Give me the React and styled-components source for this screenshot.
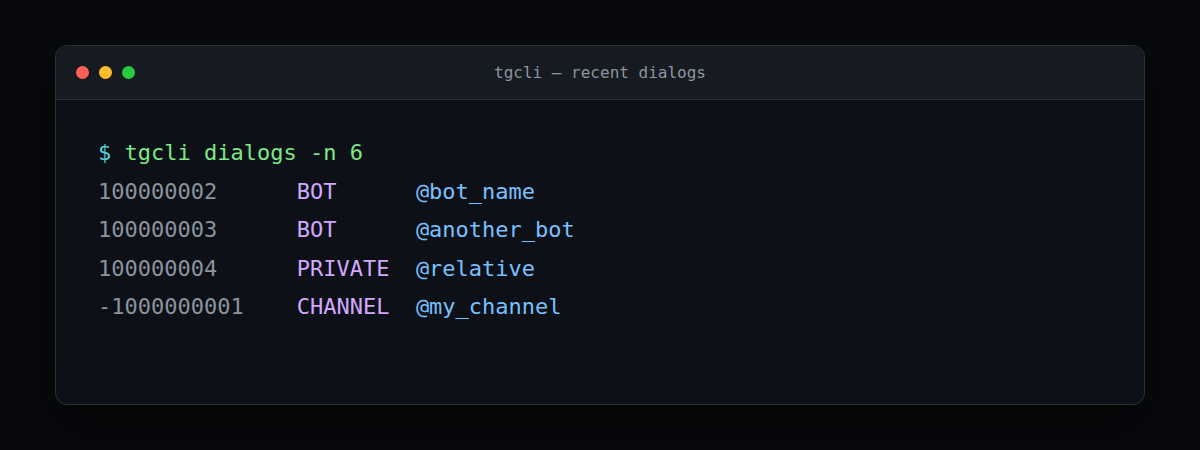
import React from "react";
import styled, { createGlobalStyle } from "styled-components";

const Global = createGlobalStyle`
  html, body { margin: 0; padding: 0; }
  body {
    background: #07090c;
    font-family: "DejaVu Sans Mono", monospace;
  }
`;

const Page = styled.div`
  height: 450px;
  display: flex;
  align-items: center;
  justify-content: center;
`;

const Window = styled.div`
  width: 1090px;
  height: 360px;
  box-sizing: border-box;
  border: 1px solid #2b3038;
  border-radius: 12px;
  background: #0d1117;
  overflow: hidden;
  display: flex;
  flex-direction: column;
  box-shadow: 0 20px 50px rgba(0, 0, 0, 0.5);
`;

const TitleBar = styled.div`
  position: relative;
  height: 53px;
  flex: none;
  background: #161b22;
  border-bottom: 1px solid #2b3038;
  display: flex;
  align-items: center;
  padding-left: 20px;
`;

const Dots = styled.div`
  display: flex;
  gap: 10px;
`;

const Dot = styled.span`
  width: 13px;
  height: 13px;
  border-radius: 50%;
  background: ${(p) => p.$color};
`;

const Title = styled.div`
  position: absolute;
  left: 0;
  right: 0;
  text-align: center;
  font-size: 16px;
  color: #8b949e;
  pointer-events: none;
`;

const Body = styled.div`
  padding: 34px 42px;
  font-size: 22px;
  line-height: 38.5px;
  white-space: pre;
`;

const Line = styled.div`
  display: grid;
  grid-template-columns: ${(p) => (p.$cols ? "15ch 9ch auto" : "auto")};
`;

const Span = styled.span`
  color: ${(p) => p.$color};
`;

const rows = [
  ["100000002", "BOT", "@bot_name"],
  ["100000003", "BOT", "@another_bot"],
  ["100000004", "PRIVATE", "@relative"],
  ["-1000000001", "CHANNEL", "@my_channel"],
];

export default function App() {
  return (
    <>
      <Global />
      <Page>
        <Window>
          <TitleBar>
            <Dots>
              <Dot $color="#ff5f56" />
              <Dot $color="#ffbd2e" />
              <Dot $color="#27c93f" />
            </Dots>
            <Title>tgcli — recent dialogs</Title>
          </TitleBar>
          <Body>
            <Line>
              <span>
                <Span $color="#56d4dd">$ </Span>
                <Span $color="#7ee787">tgcli dialogs -n 6</Span>
              </span>
            </Line>
            {rows.map(([id, type, handle]) => (
              <Line key={id} $cols>
                <Span $color="#8b949e">{id}</Span>
                <Span $color="#d2a8ff">{type}</Span>
                <Span $color="#79c0ff">{handle}</Span>
              </Line>
            ))}
          </Body>
        </Window>
      </Page>
    </>
  );
}
